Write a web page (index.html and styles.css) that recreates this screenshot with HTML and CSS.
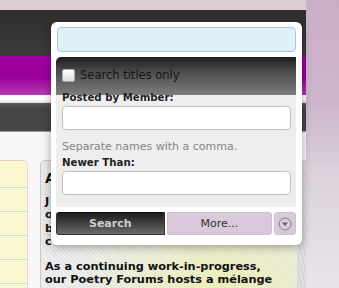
FILE: index.html
```html
<!DOCTYPE html>
<html lang="en">
<head>
    <meta charset="UTF-8">
    <meta name="viewport" content="width=device-width, initial-scale=1.0">
    <title>Poetry Forums - Search</title>
    <link rel="stylesheet" href="styles.css">
</head>
<body>
    <div class="page">
        <div class="site">
            <div class="top-strip"></div>
            <div class="navbar"></div>
            <div class="banner"></div>
            <div class="gap"></div>
            <div class="subnav"></div>
            <div class="spacer"></div>
            <div class="content-row">
                <div class="sidebar"></div>
                <div class="gutter"></div>
                <div class="main-box">
                    <h2>A</h2>
                    <p>J<br>o<br>b<br>c</p>
                    <p>As a continuing work-in-progress,<br>our Poetry Forums hosts a mélange</p>
                </div>
                <div class="edge"></div>
            </div>
        </div>
        <div class="side"></div>
    </div>

    <div class="search-popup">
        <input type="text" class="search-field" autofocus>
        <div class="options">
            <label class="titles-only">
                <input type="checkbox" class="check">
                <span>Search titles only</span>
            </label>
            <div class="field-label">Posted by Member:</div>
            <input type="text" class="text-field">
            <div class="hint">Separate names with a comma.</div>
            <div class="field-label">Newer Than:</div>
            <input type="text" class="text-field">
        </div>
        <div class="button-row">
            <button class="search-button">Search</button>
            <button class="more-button">More...</button>
            <button class="menu-button">
                <svg width="14" height="14" viewBox="0 0 14 14">
                    <circle cx="7" cy="7" r="6" fill="none" stroke="#8a8090" stroke-width="1"/>
                    <path d="M4 5.5 L10 5.5 L7 9 Z" fill="#6a6070"/>
                </svg>
            </button>
        </div>
    </div>
</body>
</html>
```

FILE: styles.css
```css
body {
    margin: 0;
    width: 339px;
    height: 288px;
    overflow: hidden;
    font-family: "DejaVu Sans", Verdana, sans-serif;
    background-color: #fff;
}
.page {
    display: grid;
    grid-template-columns: 306px 1fr;
    height: 288px;
}
.site {
    display: flex;
    flex-direction: column;
}
.top-strip {
    height: 10px;
    background-color: #dccdd5;
}
.navbar {
    height: 46px;
    background: linear-gradient(#2e2e2e, #3c3c3c);
}
.banner {
    height: 39px;
    background: linear-gradient(#a200a2, #9a009a 55%, #b43cb4);
}
.gap {
    height: 8px;
    background: linear-gradient(#fff 60%, #ddd);
}
.subnav {
    height: 28px;
    background: linear-gradient(#5a5a5a, #444 20%, #474747);
    border-bottom: 1px solid #999;
}
.spacer {
    height: 28px;
    background-color: #f8f8f8;
}
.content-row {
    flex: 1;
    display: grid;
    grid-template-columns: 28px 12px 1fr 9px;
    background-color: #f8f8f8;
}
.sidebar {
    background-color: #fbf9d2;
    background-image: repeating-linear-gradient(#fbf9d2 0 23px, #bfe6d4 23px 24px);
    background-position: 0 3px;
    border-top: 1px solid #f0c8d0;
    border-right: 1px solid #ecd0dc;
    border-top-right-radius: 5px;
}
.main-box {
    border-top: 1px solid #c8c8c8;
    border-left: 1px solid #c8c8c8;
    border-top-left-radius: 5px;
    padding: 8px 0 0 4px;
    background-color: #eaeaea;
    background-image: radial-gradient(ellipse at 70% 100%, rgba(236, 240, 170, 0.8), rgba(236, 240, 170, 0) 60%),
        repeating-linear-gradient(45deg, #eee 0 2px, #e2e2e2 2px 3px);
    font-weight: bold;
    font-size: 11.3px;
    line-height: 13.5px;
    color: #111;
    white-space: nowrap;
}
.main-box h2 {
    margin: 3px 0 9px;
    font-size: 14px;
}
.main-box p {
    margin: 0 0 11px;
}
.edge {
    background: repeating-linear-gradient(75deg, #ddd 0 3px, #d2d2d2 3px 4px);
}
.side {
    background: linear-gradient(#c9aec8, #cdb6cc 35%, #ddd3dd 60%, #eae6ea);
}

.search-popup {
    position: absolute;
    left: 51px;
    top: 22px;
    width: 251px;
    height: 223px;
    box-sizing: border-box;
    padding: 5px 6px 0 5px;
    background-color: #fff;
    border-radius: 6px;
    box-shadow: 0 2px 10px rgba(0, 0, 0, 0.35);
}
.search-field {
    display: block;
    box-sizing: border-box;
    width: 239px;
    height: 25px;
    margin: 0 0 5px 1px;
    padding: 0 4px;
    border: 1px solid #b8c4cc;
    border-radius: 4px;
    background-color: #dff0fb;
    outline: none;
    caret-color: #000;
}
.options {
    height: 150px;
    box-sizing: border-box;
    padding: 6px 5px 0 6px;
    background: linear-gradient(#1c1c1c, #4a4a4a 35%, #7c7c7c 95%, #eeeeee 95%) no-repeat;
    background-size: 100% 40px;
    background-color: #eeeeee;
    border-radius: 5px 0 0 0;
    font-size: 11px;
}
.titles-only {
    display: flex;
    align-items: center;
    gap: 5px;
    height: 24px;
    font-size: 11.5px;
    color: #151515;
}
.check {
    appearance: none;
    width: 13px;
    height: 13px;
    margin: 0;
    border: 1px solid #aaa;
    border-radius: 2px;
    background: linear-gradient(#fff, #dcdcdc);
}
.field-label {
    margin-top: 5px;
    height: 12px;
    line-height: 12px;
    font-weight: bold;
    font-size: 10.2px;
    color: #222;
}
.text-field {
    display: block;
    box-sizing: border-box;
    width: 229px;
    height: 24px;
    margin-top: 2px;
    border: 1px solid #c0c0c0;
    border-radius: 4px;
    background-color: #fff;
}
.hint {
    margin-top: 11px;
    height: 12px;
    line-height: 12px;
    color: #858585;
}
.hint + .field-label {
    margin-top: 4px;
}
.button-row {
    display: flex;
    gap: 2px;
    margin-top: 5px;
    height: 23px;
}
.button-row button {
    height: 23px;
    margin: 0;
    padding: 0;
    font-family: "DejaVu Sans", Verdana, sans-serif;
    font-size: 11px;
}
.search-button {
    width: 109px;
    border: 1px solid #333;
    border-top-color: #111;
    border-radius: 3px 0 0 3px;
    background: linear-gradient(#1e1e1e, #3a3a3a 40%, #6a6a6a);
    color: #cfcfcf;
    font-weight: bold;
}
.more-button {
    width: 106px;
    border: 1px solid #cfc0d0;
    border-radius: 0 3px 3px 0;
    background-color: #d9c9da;
    color: #333;
}
.menu-button {
    width: 22px;
    display: flex;
    align-items: center;
    justify-content: center;
    border: 1px solid #cfc0d0;
    border-radius: 3px;
    background-color: #d9c9da;
}
```
